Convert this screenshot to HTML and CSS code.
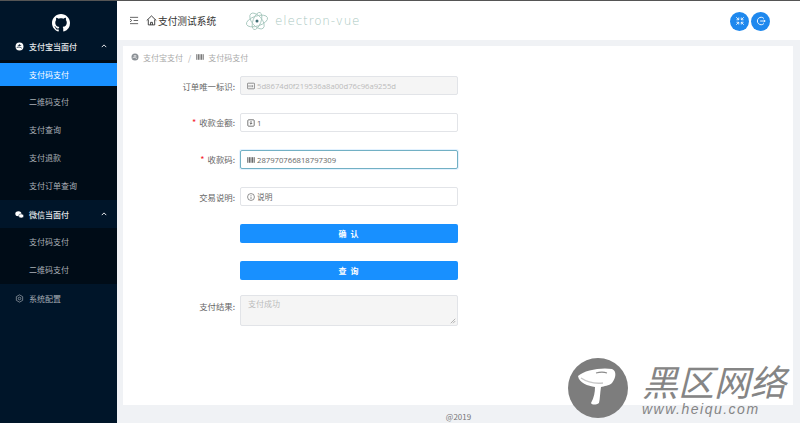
FILE: index.html
```html
<!DOCTYPE html>
<html lang="zh">
<head>
<meta charset="utf-8">
<title>支付测试系统</title>
<link rel="stylesheet" href="styles.css">
</head>
<body>
<div class="app">
  <aside class="sider">
    <div class="logo">
      <svg width="18" height="18" viewBox="0 0 16 16"><path fill="#fff" d="M8 0C3.58 0 0 3.58 0 8c0 3.54 2.29 6.53 5.47 7.59.4.07.55-.17.55-.38 0-.19-.01-.82-.01-1.49-2.01.37-2.53-.49-2.69-.94-.09-.23-.48-.94-.82-1.13-.28-.15-.68-.52-.01-.53.63-.01 1.08.58 1.23.82.72 1.21 1.87.87 2.33.66.07-.52.28-.87.51-1.07-1.78-.2-3.64-.89-3.64-3.95 0-.87.31-1.59.82-2.15-.08-.2-.36-1.02.08-2.12 0 0 .67-.21 2.2.82.64-.18 1.32-.27 2-.27s1.36.09 2 .27c1.53-1.04 2.2-.82 2.2-.82.44 1.1.16 1.92.08 2.12.51.56.82 1.27.82 2.15 0 3.07-1.87 3.75-3.65 3.95.29.25.54.73.54 1.48 0 1.07-.01 1.93-.01 2.2 0 .21.15.46.55.38A8.01 8.01 0 0 0 16 8c0-4.42-3.58-8-8-8z"/></svg>
    </div>
    <nav class="menu">
      <div class="group">
        <svg class="gicon" viewBox="0 0 16 16"><circle cx="8" cy="8" r="7" fill="#fff"/><path d="M3 10c3-2 6-1 9 1M5 6h6M8 4v3" stroke="#001529" stroke-width="1.4" fill="none"/></svg>
        <span class="glabel">支付宝当面付</span>
        <svg class="caret" viewBox="0 0 8 5"><path d="M1 4l3-3 3 3" stroke="#fff" stroke-width="1.2" fill="none"/></svg>
      </div>
      <div class="sub">
        <a class="item active">支付码支付</a>
        <a class="item">二维码支付</a>
        <a class="item">支付查询</a>
        <a class="item">支付退款</a>
        <a class="item">支付订单查询</a>
      </div>
      <div class="group">
        <svg class="gicon" viewBox="0 0 16 16"><ellipse cx="6" cy="6.5" rx="5.5" ry="4.5" fill="#fff"/><ellipse cx="11" cy="10.5" rx="4.5" ry="3.6" fill="#fff" stroke="#001529" stroke-width=".8"/></svg>
        <span class="glabel">微信当面付</span>
        <svg class="caret" viewBox="0 0 8 5"><path d="M1 4l3-3 3 3" stroke="#fff" stroke-width="1.2" fill="none"/></svg>
      </div>
      <div class="sub">
        <a class="item">支付码支付</a>
        <a class="item">二维码支付</a>
      </div>
      <div class="group muted">
        <svg class="gicon" viewBox="0 0 16 16"><path d="M8 1.5l5.6 3.2v6.6L8 14.5l-5.6-3.2V4.700z" fill="none" stroke="#a6adb4" stroke-width="1.2"/><circle cx="8" cy="8" r="2.3" fill="none" stroke="#a6adb4" stroke-width="1.2"/></svg>
        <span class="glabel">系统配置</span>
      </div>
    </nav>
  </aside>
  <div class="main">
    <header class="topbar">
      <svg class="fold" viewBox="0 0 10 10"><path d="M0 1.500h9M4 5h5M0 8.500h9M0 3.500L2 5 0 6.500" stroke="#444" stroke-width=".9" fill="none"/></svg>
      <svg class="home" viewBox="0 0 12 12"><path d="M.8 6L6 1l5.200 5M2.500 5v5.800h7V5M5 10.800V8h2v2.800" stroke="#333" fill="none"/></svg>
      <span class="title">支付测试系统</span>
      <div class="brand">
        <svg class="atom" width="24" height="20" viewBox="0 0 24 20"><g fill="none" stroke="#a9c9bf" stroke-width=".9"><ellipse cx="12" cy="10" rx="11" ry="5" transform="rotate(-18 12 10)"/><ellipse cx="12" cy="10" rx="9.500" ry="5" transform="rotate(50 12 10)"/><ellipse cx="12" cy="10" rx="9" ry="4" transform="rotate(-70 12 10)"/></g><circle cx="12" cy="10" r="1.500" fill="#3d6d73"/></svg>
        <span class="brandtext">electron-vue</span>
      </div>
      <div class="actions">
        <span class="roundbtn"><svg viewBox="0 0 12 12"><path d="M1.500 1.500l3 3M4.500 1.800v2.700H1.800M10.500 1.500l-3 3M7.500 1.800v2.700h2.700M1.500 10.500l3-3M4.500 10.200V7.500H1.800M10.500 10.500l-3-3M7.500 10.200V7.500h2.700" stroke="#fff" fill="none"/></svg></span>
        <span class="roundbtn"><svg viewBox="0 0 12 12"><path d="M9.500 3A4.500 4.500 0 1 0 9.500 9M5 6h6M9.500 4.500L11 6 9.500 7.500" stroke="#fff" stroke-width="1.100" fill="none"/></svg></span>
      </div>
    </header>
    <div class="content">
      <section class="card">
        <div class="crumbs">
          <svg class="cicon" viewBox="0 0 16 16"><circle cx="8" cy="8" r="7" fill="#8a8f94"/><path d="M3 10c3-2 6-1 9 1M5 6h6M8 4v3" stroke="#fff" stroke-width="1.400" fill="none"/></svg>
          <span>支付宝支付</span>
          <span class="sep">/</span>
          <svg class="cicon bar" viewBox="0 0 10 10"><path d="M1 1.500v7M3 1.500v7M5 1.500v7M7 1.500v7M9 1.500v7" stroke="#666" stroke-width="1.200"/></svg>
          <span>支付码支付</span>
        </div>
        <form class="form">
          <div class="row">
            <label class="lab">订单唯一标识:</label>
            <div class="field disabled">
              <svg class="ficon" viewBox="0 0 10 10"><rect x=".5" y="1.500" width="9" height="7" rx="1" fill="none" stroke="#777"/><path d="M2.500 6.500V4M5 6.500V4M7 6.500V4" stroke="#777"/></svg>
              <span class="val ph">5d8674d0f219536a8a00d76c96a9255d</span>
            </div>
          </div>
          <div class="row">
            <label class="lab"><i class="req">*</i>收款金额:</label>
            <div class="field">
              <svg class="ficon" viewBox="0 0 10 10"><rect x="1" y="1" width="8" height="8" rx="1" fill="none" stroke="#555"/><path d="M5 2.500v4M3.500 5L5 6.500 6.500 5" stroke="#555" fill="none"/></svg>
              <span class="val">1</span>
            </div>
          </div>
          <div class="row">
            <label class="lab"><i class="req">*</i>收款码:</label>
            <div class="field focus">
              <svg class="ficon" viewBox="0 0 10 10"><path d="M1 1.500v7M3 1.500v7M5 1.500v7M7 1.500v7M9 1.500v7" stroke="#555" stroke-width="1.200"/></svg>
              <span class="val">287970766818797309</span>
            </div>
          </div>
          <div class="row">
            <label class="lab">交易说明:</label>
            <div class="field">
              <svg class="ficon" viewBox="0 0 10 10"><circle cx="5" cy="5" r="4.300" fill="none" stroke="#555" stroke-width=".8"/><path d="M5 4.500v3M5 2.500v1" stroke="#555" stroke-width=".8"/></svg>
              <span class="val">说明</span>
            </div>
          </div>
          <div class="row btnrow"><span class="lab"></span><button type="button" class="btn">确 认</button></div>
          <div class="row btnrow"><span class="lab"></span><button type="button" class="btn">查 询</button></div>
          <div class="row arearow">
            <label class="lab">支付结果:</label>
            <div class="area">支付成功
              <svg class="grip" viewBox="0 0 8 8"><path d="M1 7l6-6M4 7l3-3" stroke="#888" stroke-width=".8"/></svg>
            </div>
          </div>
        </form>
      </section>
    </div>
    <footer class="foot">@2019</footer>
  </div>
</div>
<div class="mark">
  <svg class="mush" width="60" height="60" viewBox="0 0 60 60"><circle cx="30" cy="30" r="30" fill="#7d7d7d"/><path d="M10 18C16 12 34 9 44 11 49 13 48 20 44 25 41 28 36 28 33 29 32 35 32 41 31 45 28 47 24 47 23 45 26 40 27 34 27 29 20 28 11 25 10 18z" fill="#fff"/><path d="M28 15c4-1 8-1 11 0" stroke="#8a8a8a" stroke-width="1.200" fill="none"/><path d="M13 20c6 4 14 6 22 5" stroke="#c8c8c8" stroke-width="1.500" fill="none"/></svg>
  <div class="marktext">
    <span class="markcn">黑区网络</span>
    <span class="markurl">www.heiqu.com</span>
  </div>
</div>
</body>
</html>
```

FILE: styles.css
```css
* { box-sizing: border-box; }
html, body { margin: 0; height: 100%; overflow: hidden; }
body {
  font-family: "Noto Sans CJK SC", "Liberation Sans", sans-serif;
  font-size: 8px;
  color: #555;
  background: #f0f2f5;
}
a { display: block; }
.app { display: flex; height: 423px; border-top: 1px solid #555; }

.sider { width: 117px; flex: none; background: #001529; color: #a6adb4; }
.logo { height: 31px; display: flex; align-items: flex-end; justify-content: center; padding-left: 5px; }
.menu { display: flex; flex-direction: column; }
.group { height: 28px; display: flex; align-items: center; padding: 0 10px 0 15px; color: #e4e7ea; gap: 4px; }
.group.muted { color: #a6adb4; }
.gicon { width: 9px; height: 9px; flex: none; }
.glabel { flex: 1; padding-left: 1px; font-weight: 500; }
.muted .glabel { font-weight: 400; }
.caret { width: 6px; height: 4px; }
.sub { background: #000c17; }
.item { height: 28px; line-height: 28px; padding-left: 29px; color: #aab0b6; }
.item.active { background: #1890ff; color: #fff; height: 23px; line-height: 23px; margin: 3px 0 2px; }

.main { flex: 1; display: flex; flex-direction: column; min-width: 0; }
.topbar { height: 39px; flex: none; background: #fff; display: flex; align-items: center; padding: 0 28px 0 13px; }
.fold { width: 9px; height: 9px; margin-right: 7px; flex: none; }
.home { width: 11px; height: 11px; margin-right: 1px; flex: none; }
.title { font-size: 9.7px; color: #333; width: 71px; white-space: nowrap; }
.brand { display: flex; align-items: center; gap: 6px; margin-left: 16px; }
.brandtext { font-family: "DejaVu Sans", sans-serif; font-size: 12px; font-weight: 200; letter-spacing: .85px; color: #a9c7c0; }
.actions { margin-left: auto; display: flex; gap: 2px; margin-right: 2px; margin-top: 1px; }
.roundbtn { width: 19px; height: 19px; border-radius: 50%; background: #1e88ee; display: flex; align-items: center; justify-content: center; }
.roundbtn svg { width: 10px; height: 10px; }

.content { flex: 1; padding: 6px 7px 0 6px; display: flex; min-height: 0; }
.card { flex: 1; background: #fff; }
.crumbs { height: 22px; padding-left: 8px; display: flex; align-items: center; gap: 4px; color: #aaa; }
.cicon { width: 8px; height: 8px; flex: none; }
.sep { margin: 0 1px; }

.form { display: flex; flex-direction: column; padding-top: 8px; }
.row { display: flex; align-items: center; height: 19px; margin-bottom: 18px; }
.lab { width: 117px; padding-right: 5px; text-align: right; color: #666; flex: none; font-size: 8.4px; }
.req { color: #f5222d; font-style: normal; margin-right: 3px; font-size: 9px; }
.field {
  width: 218px; height: 19px; border: 1px solid #e2e4e8; border-radius: 2px;
  display: flex; align-items: center; padding-left: 6px; gap: 2px; background: #fff;
}
.field.disabled { background: #f5f5f5; }
.field.focus { border-color: #72b0c4; box-shadow: 0 0 0 1px rgba(24,144,255,.12); }
.ficon { width: 8px; height: 8px; flex: none; }
.val { color: #666; font-size: 7.7px; white-space: nowrap; font-family: "Open Sans", "Noto Sans CJK SC", sans-serif; }
.val.ph { color: #bbb; }
.btnrow { margin-bottom: 18px; }
.btn {
  width: 218px; height: 19px; border: 0; border-radius: 2px; padding: 0;
  background: #1890ff; color: #fff; font: inherit; font-weight: 700;
  letter-spacing: 1px;
}
.arearow { height: 31px; margin: -3px 0 0; align-items: flex-start; }
.arearow .lab { padding-top: 5px; }
.area {
  position: relative; width: 218px; height: 31px; background: #f5f5f5;
  border: 1px solid #e2e4e8; border-radius: 2px; padding: 2px 7px; color: #bbb;
}
.grip { position: absolute; right: 1px; bottom: 1px; width: 6px; height: 6px; }

.foot { height: 18px; flex: none; text-align: center; line-height: 18px; padding-top: 3px; color: #777; background: #f0f2f5; }

.mark { position: absolute; left: 568px; top: 358px; display: flex; gap: 14px; color: #858585; }
.marktext { display: flex; flex-direction: column; width: 146px; }
.markcn { font-family: "Noto Sans CJK SC", sans-serif; font-weight: 400; font-style: italic; font-size: 36px; line-height: 44px; white-space: nowrap; }
.markurl { font-family: "Liberation Sans", sans-serif; font-style: italic; font-weight: 400; font-size: 14px; line-height: 14px; letter-spacing: 1.5px; white-space: nowrap; }
```
